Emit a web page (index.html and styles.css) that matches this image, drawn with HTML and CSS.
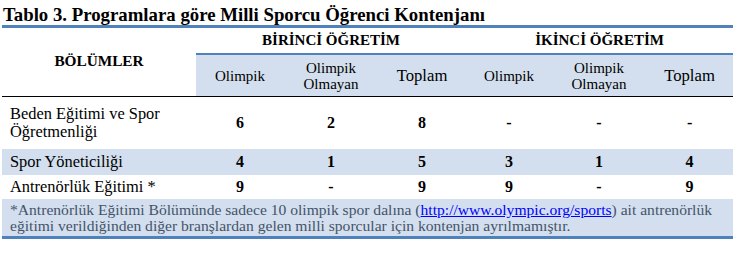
FILE: index.html
```html
<!DOCTYPE html>
<html lang="tr">
<head>
<meta charset="utf-8">
<link rel="stylesheet" href="styles.css">
</head>
<body>
<div class="page">
  <div class="title">Tablo 3. Programlara göre Milli Sporcu Öğrenci Kontenjanı</div>
  <table class="tbl">
    <colgroup>
      <col class="c-name"><col class="c1"><col class="c2"><col class="c3"><col class="c4"><col class="c5"><col class="c6">
    </colgroup>
    <thead>
      <tr class="group">
        <th rowspan="2" class="bolum">BÖLÜMLER</th>
        <th colspan="3" class="grp">BİRİNCİ ÖĞRETİM</th>
        <th colspan="3" class="grp">İKİNCİ ÖĞRETİM</th>
      </tr>
      <tr class="sub">
        <th class="sm">Olimpik</th>
        <th class="sm">Olimpik<br>Olmayan</th>
        <th class="lg">Toplam</th>
        <th class="sm">Olimpik</th>
        <th class="sm">Olimpik<br>Olmayan</th>
        <th class="lg">Toplam</th>
      </tr>
    </thead>
    <tbody>
      <tr class="r1">
        <td class="name">Beden Eğitimi ve Spor<br>Öğretmenliği</td>
        <td>6</td><td>2</td><td>8</td><td>-</td><td>-</td><td>-</td>
      </tr>
      <tr class="r2 shade">
        <td class="name">Spor Yöneticiliği</td>
        <td>4</td><td>1</td><td>5</td><td>3</td><td>1</td><td>4</td>
      </tr>
      <tr class="r3">
        <td class="name">Antrenörlük Eğitimi *</td>
        <td>9</td><td>-</td><td>9</td><td>9</td><td>-</td><td>9</td>
      </tr>
    </tbody>
    <tfoot>
      <tr>
        <td colspan="7" class="note"><span class="nl">*Antrenörlük Eğitimi Bölümünde sadece 10 olimpik spor dalına (<a href="#">http://www.olympic.org/sports</a>) ait antrenörlük</span><br><span class="nl">eğitimi verildiğinden diğer branşlardan gelen milli sporcular için kontenjan ayrılmamıştır.</span></td>
      </tr>
    </tfoot>
  </table>
</div>
</body>
</html>
```

FILE: styles.css
```css
html, body {
  margin: 0;
  padding: 0;
  background: #ffffff;
}
.page {
  padding: 4px 4px 0 2px;
  font-family: "Liberation Serif", "Times New Roman", Times, serif;
  color: #000;
}
.title {
  font-weight: bold;
  font-size: 18.8px;
  line-height: 21px;
  padding-left: 1px;
}
.tbl {
  width: 731px;
  border-collapse: separate;
  border-spacing: 0;
  border-top: 3px solid #4f81bd;
  border-bottom: 3px solid #4f81bd;
  table-layout: fixed;
  font-family: "Liberation Serif", "Times New Roman", Times, serif;
}
.c-name { width: 194px; }
.c1 { width: 88px; }
.c2 { width: 94px; }
.c3 { width: 88px; }
.c4 { width: 86px; }
.c5 { width: 94px; }
.c6 { width: 87px; }
.tbl th, .tbl td {
  padding: 0;
  text-align: center;
  vertical-align: middle;
}
.group th.grp {
  height: 25px;
  font-size: 15px;
  font-weight: bold;
  border-bottom: 2px solid #4f81bd;
}
.bolum {
  font-size: 15.3px;
  font-weight: bold;
  border-bottom: 1px solid #000;
  vertical-align: middle;
  padding-bottom: 2px !important;
}
.sub th {
  height: 41px;
  background: #d3dfee;
  font-weight: normal;
  border-bottom: 1px solid #000;
}
.sub th.sm {
  font-size: 15px;
  line-height: 16px;
}
.sub th.lg {
  font-size: 16.7px;
}
.tbl tbody td {
  font-size: 16px;
  font-weight: bold;
  line-height: 18px;
}
.tbl tbody td.name {
  text-align: left;
  font-weight: normal;
  font-size: 16.4px;
  padding-left: 8px;
}
.r1 td { height: 52px; }
.r2 td { height: 26px; }
.r3 td { height: 24px; }
.shade td { background: #d3dfee; }
.note {
  background: #d3dfee;
  text-align: left !important;
  color: #44546a;
  font-size: 15.6px;
  line-height: 16px;
  padding: 3px 4px 2px 8px !important;
}
.note .nl {
  white-space: nowrap;
}
.note a {
  color: #0000ff;
  text-decoration: underline;
}
```
